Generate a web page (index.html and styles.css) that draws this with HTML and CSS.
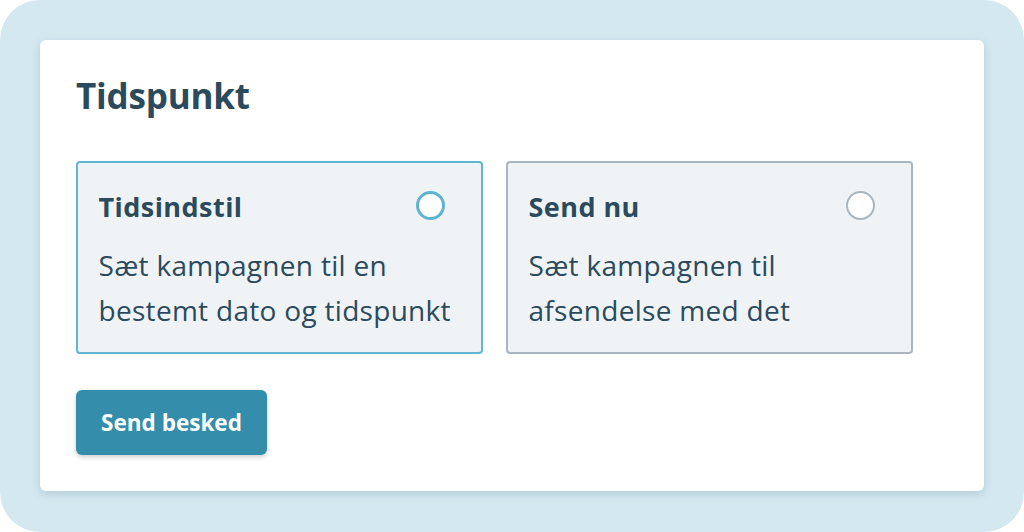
FILE: index.html
```html
<!DOCTYPE html>
<html lang="da">
<head>
<meta charset="utf-8">
<link rel="stylesheet" href="styles.css">
</head>
<body>
<div class="frame">
  <section class="panel">
    <h1 class="panel-title">Tidspunkt</h1>
    <div class="options">
      <div class="option selected">
        <div class="option-head">
          <span class="option-title">Tidsindstil</span>
          <span class="radio"></span>
        </div>
        <p class="option-text">Sæt kampagnen til en bestemt dato og tidspunkt</p>
      </div>
      <div class="option">
        <div class="option-head">
          <span class="option-title">Send nu</span>
          <span class="radio"></span>
        </div>
        <p class="option-text">Sæt kampagnen til afsendelse med det</p>
      </div>
    </div>
    <button class="btn">Send besked</button>
  </section>
</div>
</body>
</html>
```
FILE: styles.css
```css
html, body {
  margin: 0;
  padding: 0;
  background: #ffffff;
}
body {
  font-family: "Open Sans", "Noto Sans", sans-serif;
  color: #2b4a5c;
}
.frame {
  box-sizing: border-box;
  width: 1024px;
  height: 532px;
  background: #d4e8f0;
  border-radius: 40px;
  padding: 40px;
}
.panel {
  box-sizing: border-box;
  width: 944px;
  height: 451px;
  background: #ffffff;
  border-radius: 6px;
  box-shadow: 0 3px 10px rgba(40, 80, 100, 0.18);
  padding: 34px 36px 0 36px;
}
.panel-title {
  margin: 0;
  font-size: 35px;
  font-weight: 700;
  line-height: 44px;
  letter-spacing: -0.2px;
}
.options {
  display: flex;
  gap: 23px;
  margin-top: 43px;
}
.option {
  box-sizing: border-box;
  width: 407px;
  height: 193px;
  background: #eff3f6;
  border: 2px solid #aab6bf;
  border-radius: 4px;
  padding: 21px 30px 0 20.5px;
  overflow: hidden;
}
.option.selected {
  border-color: #62b6d3;
}
.option-head {
  display: flex;
  justify-content: space-between;
  align-items: center;
  height: 45px;
}
.option-title {
  font-size: 27px;
  font-weight: 700;
  line-height: 45px;
  letter-spacing: 0.45px;
}
.radio {
  box-sizing: border-box;
  width: 29px;
  height: 29px;
  border-radius: 50%;
  background: #ffffff;
  border: 2px solid #a9b6be;
  margin-top: -3px;
  margin-right: 6px;
}
.option.selected .radio {
  border: 3.5px solid #5db4d1;
}
.option-text {
  margin: 14px 0 0 0;
  font-size: 28px;
  line-height: 45px;
  letter-spacing: 0.3px;
}
.btn {
  display: flex;
  align-items: center;
  justify-content: center;
  margin-top: 36px;
  width: 191px;
  height: 65px;
  background: #338dab;
  color: #ffffff;
  border: none;
  border-radius: 6px;
  font-family: "Open Sans", "Noto Sans", sans-serif;
  font-size: 22.5px;
  font-weight: 700;
  box-shadow: 0 2px 5px rgba(0, 0, 0, 0.2);
}
```
